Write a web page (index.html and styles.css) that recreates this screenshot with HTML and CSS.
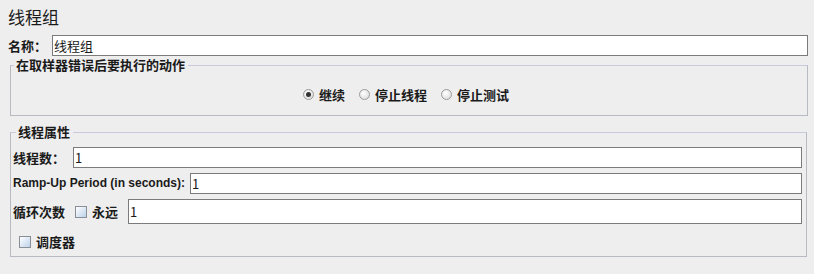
FILE: index.html
```html
<!DOCTYPE html>
<html lang="zh">
<head>
  <meta charset="UTF-8">
  <title>线程组</title>
  <link rel="stylesheet" href="styles.css">
</head>
<body>
  <h1 class="title">线程组</h1>

  <div class="name-row">
    <span class="lbl">名称：</span>
    <div class="field">线程组</div>
  </div>

  <fieldset class="box on-error">
    <legend>在取样器错误后要执行的动作</legend>
    <div class="radios">
      <span class="opt"><span class="radio checked"></span>继续</span>
      <span class="opt"><span class="radio"></span>停止线程</span>
      <span class="opt"><span class="radio"></span>停止测试</span>
    </div>
  </fieldset>

  <fieldset class="box props">
    <legend>线程属性</legend>
    <div class="row">
      <span class="lbl">线程数：</span>
      <div class="field">1</div>
    </div>
    <div class="row">
      <span class="lbl latin">Ramp-Up Period (in seconds):</span>
      <div class="field">1</div>
    </div>
    <div class="row loop">
      <span class="lbl">循环次数</span>
      <span class="opt"><span class="check"></span>永远</span>
      <div class="field tall">1</div>
    </div>
    <div class="row sched">
      <span class="opt"><span class="check"></span>调度器</span>
    </div>
  </fieldset>
</body>
</html>
```

FILE: styles.css
```css
body { margin: 0; padding: 7px 6px 0 8px; background: #eeeeee; font-family: "Noto Sans CJK SC", "Liberation Sans", sans-serif; font-size: 13px; line-height: 17px; color: #1a1a1a; }
.title { margin: 0; font-size: 17px; font-weight: normal; line-height: 20px; height: 28px; }
.lbl { font-weight: bold; white-space: nowrap; }
.latin { font-family: "Liberation Sans", sans-serif; font-size: 12px; }
.field { flex: 1; height: 19px; line-height: 19px; background: #fff; border: 1px solid #7b7b7b; padding-left: 1px; font-weight: normal; }

.name-row { display: flex; align-items: center; gap: 5px; }

.box { margin: 2px 0 0 2px; padding: 0; border: 1px solid #b7bbc1; border-top-color: #c9c9de; }
.box legend { margin-left: 3px; padding: 0 3px 0 2px; font-weight: bold; line-height: 14px; }
.radios { display: flex; justify-content: center; gap: 14px; padding: 14px 6px 12px 0; }
.opt { display: inline-flex; align-items: center; gap: 5px; font-weight: bold; }

.radio { width: 11px; height: 11px; border: 1px solid #9a9a9a; border-radius: 50%; background: radial-gradient(circle at 40% 35%, #ffffff, #d6d6d6); box-sizing: border-box; position: relative; }
.radio.checked::after { content: ""; position: absolute; left: 2px; top: 2px; width: 5px; height: 5px; border-radius: 50%; background: #333; }
.check { width: 12px; height: 12px; border: 1px solid #8a8f96; background: linear-gradient(135deg, #ffffff, #bcd2ea); box-sizing: border-box; }

.props { margin: 9px 1px 0 2px; padding: 8px 4px 5px 2px; }
.row { display: flex; align-items: center; gap: 8px; margin-bottom: 5px; }
.row .latin + .field { margin-left: -3px; }
.loop { margin-top: 5px; gap: 10px; }
.loop .field.tall { height: 23px; line-height: 23px; }
.sched { padding-left: 6px; margin: 8px 0 0; height: 19px; }
```
